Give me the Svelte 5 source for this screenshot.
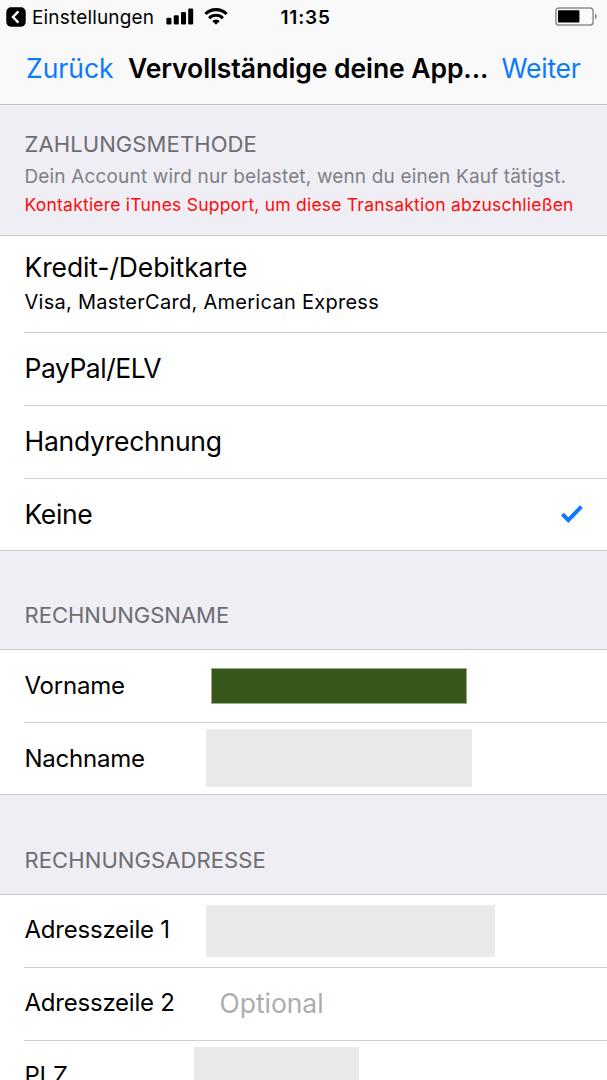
<script>
  let selected = 'none';

  const methods = [
    { id: 'card', label: 'Kredit-/Debitkarte', detail: 'Visa, MasterCard, American Express' },
    { id: 'paypal', label: 'PayPal/ELV' },
    { id: 'mobile', label: 'Handyrechnung' },
    { id: 'none', label: 'Keine' },
  ];
</script>

<div class="screen">
  <div class="status-bar">
    <div class="status-left">
      <svg class="back-icon" viewBox="0 0 20 20" width="20" height="20">
        <rect x="0.3" y="0.3" width="19.4" height="19.4" rx="4.6" fill="#000" />
        <path d="M12.4 4.4 L7 10 L12.4 15.6" fill="none" stroke="#fff" stroke-width="2.4" />
      </svg>
      <span class="return-app">Einstellungen</span>
      <svg class="signal" viewBox="0 0 28 17" width="28" height="17">
        <rect x="0.4" y="9.8" width="5" height="6.8" rx="1.3" />
        <rect x="7.8" y="7.3" width="5" height="9.3" rx="1.3" />
        <rect x="15" y="4" width="5" height="12.6" rx="1.3" />
        <rect x="22.2" y="0.5" width="5" height="16.1" rx="1.3" />
      </svg>
      <svg class="wifi" viewBox="0 0 24 17" width="24" height="17">
        <path d="M1.4 6 A15 15 0 0 1 22.6 6" fill="none" stroke="#000" stroke-width="3.1" />
        <path d="M5.1 10.2 A9.8 9.8 0 0 1 18.9 10.2" fill="none" stroke="#000" stroke-width="3" />
        <path d="M12 16.6 L8.2 13 A5.4 5.4 0 0 1 15.8 13 Z" />
      </svg>
    </div>
    <span class="clock">11:35</span>
    <svg class="battery" viewBox="0 0 43 19" width="43" height="19">
      <rect x="0.9" y="0.9" width="37.2" height="17.2" rx="3.2" fill="none" stroke="#8e8e8e" stroke-width="1.5" />
      <rect x="3" y="3.2" width="21.4" height="12.4" rx="0.8" />
      <path d="M40 6.6 C42.4 7.8 42.4 11.2 40 12.4 Z" fill="#8e8e8e" />
    </svg>
  </div>

  <header class="nav-bar">
    <button class="nav-btn back">Zurück</button>
    <h1>Vervollständige deine App...</h1>
    <button class="nav-btn next">Weiter</button>
  </header>

  <div class="section-header payment">
    <h2 class="t-payment">ZAHLUNGSMETHODE</h2>
    <p class="hint">Dein Account wird nur belastet, wenn du einen Kauf tätigst.</p>
    <p class="error">Kontaktiere iTunes Support, um diese Transaktion abzuschließen</p>
  </div>

  <div class="group">
    {#each methods as method}
      <!-- svelte-ignore a11y_click_events_have_key_events, a11y_no_static_element_interactions -->
      <div class="row {method.id}" on:click={() => (selected = method.id)}>
        <div class="method-text">
          <span class="method-label">{method.label}</span>
          {#if method.detail}
            <span class="method-detail">{method.detail}</span>
          {/if}
        </div>
        {#if selected === method.id}
          <svg class="check" viewBox="0 0 24 20" width="24" height="20">
            <path d="M2.4 10.2 L8.3 16.2 L21.4 2.6" fill="none" stroke="#0a7aff" stroke-width="4" />
          </svg>
        {/if}
      </div>
    {/each}
  </div>

  <div class="section-header">
    <h2>RECHNUNGSNAME</h2>
  </div>

  <div class="group">
    <div class="row">
      <span class="label">Vorname</span>
      <span class="field green"></span>
    </div>
    <div class="row">
      <span class="label last-name">Nachname</span>
      <span class="field surname"></span>
    </div>
  </div>

  <div class="section-header address">
    <h2 class="t-address">RECHNUNGSADRESSE</h2>
  </div>

  <div class="group">
    <div class="row">
      <span class="label addr">Adresszeile 1</span>
      <span class="field street"></span>
    </div>
    <div class="row">
      <span class="label addr">Adresszeile 2</span>
      <span class="placeholder">Optional</span>
    </div>
    <div class="row">
      <span class="label zip">PLZ</span>
      <span class="field postcode"></span>
    </div>
  </div>
</div>

<style>
  :global(body) {
    margin: 0;
    overflow: hidden;
  }

  .screen {
    width: 607px;
    height: 1080px;
    overflow: hidden;
    background: #efeef4;
    color: #000;
    font-family: Inter, "Liberation Sans", sans-serif;
    white-space: nowrap;
  }

  h1,
  h2,
  p {
    margin: 0;
    font-weight: 400;
  }

  .status-bar {
    display: grid;
    grid-template-columns: 280.5px 1fr auto;
    align-items: center;
    height: 33px;
    padding: 0 9px 0 0;
    box-sizing: border-box;
    background: #f9f9f9;
  }

  .status-left {
    display: flex;
    align-items: center;
    padding-left: 6px;
  }

  .return-app {
    width: 134px;
    margin-left: 6px;
    padding-top: 1px;
    font-size: 19px;
    letter-spacing: 0.17px;
  }

  .wifi {
    margin-left: 10px;
  }

  .clock {
    padding-top: 1px;
    font-size: 19px;
    font-weight: 600;
    letter-spacing: 0.8px;
  }

  .nav-bar {
    display: flex;
    align-items: center;
    height: 72px;
    padding: 0 26px 2px;
    box-sizing: border-box;
    background: #f9f9f9;
    border-bottom: 1px solid #c4c4c6;
  }

  .nav-btn {
    flex: none;
    padding: 0;
    border: 0;
    background: none;
    color: #0a7aff;
    font-family: inherit;
    font-size: 26.5px;
    text-align: left;
  }

  .back {
    width: 102px;
  }

  .next {
    letter-spacing: -0.25px;
  }

  h1 {
    width: 373.5px;
    font-size: 26.5px;
    font-weight: 600;
    letter-spacing: -0.08px;
  }

  .section-header {
    display: flex;
    flex-direction: column;
    justify-content: flex-end;
    height: 98px;
    padding: 0 24.5px 20px;
    box-sizing: border-box;
  }

  .section-header.address {
    height: 99px;
  }

  .section-header.payment {
    height: 130px;
    padding-bottom: 18px;
  }

  h2 {
    color: #6d6d72;
    font-size: 22px;
    line-height: 28px;
  }

  .t-payment {
    line-height: 32px;
    letter-spacing: 0.1px;
  }

  .t-address {
    letter-spacing: 0.1px;
  }

  .hint {
    color: #808085;
    font-size: 19px;
    line-height: 33px;
    letter-spacing: 0.16px;
  }

  .error {
    color: #ff0a0a;
    font-size: 17.5px;
    line-height: 24px;
    letter-spacing: 0.22px;
  }

  .group {
    background: #fff;
    border-top: 1px solid #c8c7cc;
    border-bottom: 1px solid #c8c7cc;
  }

  .row {
    display: flex;
    align-items: center;
    height: 73px;
    margin-left: 24px;
    padding: 0 0 2px 0.5px;
    box-sizing: border-box;
    border-bottom: 1px solid #d0d0d2;
  }

  .row:last-child {
    height: 71px;
    border-bottom: 0;
  }

  .row.card {
    height: 97px;
    padding-top: 2px;
    padding-bottom: 0;
  }

  .method-text {
    display: flex;
    flex: 1;
    flex-direction: column;
  }

  .method-label {
    font-size: 26.5px;
    line-height: 34px;
    letter-spacing: -0.12px;
  }

  .paypal .method-label {
    letter-spacing: -0.5px;
  }

  .mobile .method-label {
    letter-spacing: -0.25px;
  }

  .none .method-label {
    letter-spacing: -0.4px;
  }

  .method-detail {
    padding-top: 1px;
    font-size: 20px;
    line-height: 35px;
    letter-spacing: 0.28px;
  }

  .check {
    margin-right: 23px;
  }

  .label {
    flex: none;
    width: 181.5px;
    font-size: 24px;
    letter-spacing: -0.22px;
  }

  .last-name {
    padding-top: 1px;
  }

  .addr {
    padding-bottom: 1px;
  }

  .field {
    background: #eaeaea;
  }

  .green {
    width: 256px;
    height: 36px;
    margin: 2px 0 0 5px;
    border: 1px solid #9aab8c;
    box-sizing: border-box;
    background: #38571a;
  }

  .surname {
    width: 266px;
    height: 58px;
  }

  .street {
    width: 289px;
    height: 52px;
    margin-top: 1px;
  }

  .placeholder {
    margin-left: 13.5px;
    color: #adadad;
    font-size: 26.5px;
    letter-spacing: -0.05px;
  }

  .zip {
    width: 169px;
  }

  .postcode {
    width: 165px;
    height: 58px;
  }
</style>
